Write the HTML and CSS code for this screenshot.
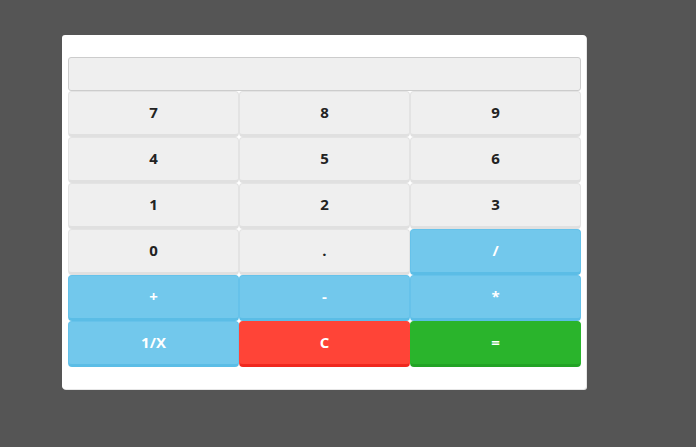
FILE: index.html
```html
<!DOCTYPE html>
<html>
<head>
<meta charset="utf-8">
<link rel="stylesheet" href="styles.css">
</head>
<body>
<div class="calc">
  <div class="display"></div>
  <div class="keys">
    <button class="key">7</button>
    <button class="key">8</button>
    <button class="key">9</button>
    <button class="key">4</button>
    <button class="key">5</button>
    <button class="key">6</button>
    <button class="key">1</button>
    <button class="key">2</button>
    <button class="key">3</button>
    <button class="key">0</button>
    <button class="key">.</button>
    <button class="key op">/</button>
    <button class="key op">+</button>
    <button class="key op">-</button>
    <button class="key op">*</button>
    <button class="key op">1/X</button>
    <button class="key clear">C</button>
    <button class="key equals">=</button>
  </div>
</div>
</body>
</html>
```

FILE: styles.css
```css
html, body {
  margin: 0;
  padding: 0;
  background: #555555;
  height: 100%;
}
body {
  font-family: "Open Sans", "Noto Sans", sans-serif;
}
.calc {
  box-sizing: border-box;
  margin: 35px 0 0 62px;
  width: 524px;
  height: 354px;
  background: #ffffff;
  border-radius: 3px;
  padding: 22px 5px 0 6px;
  box-shadow: 1px 1px 0 #e6e6e6;
}
.display {
  box-sizing: border-box;
  height: 34px;
  width: 513px;
  background: #efefef;
  border: 1px solid #cccccc;
  border-radius: 3px;
}
.keys {
  display: grid;
  grid-template-columns: 171px 171px 171px;
  grid-auto-rows: 46px;
}
.key {
  box-sizing: border-box;
  border: 1px solid #e3e3e3;
  border-bottom: 3px solid #e0e0e0;
  border-radius: 4px;
  background: #efefef;
  color: #222222;
  font-family: "Open Sans", "Noto Sans", sans-serif;
  font-weight: 700;
  font-size: 15px;
  padding: 0 0 2px 0;
  margin: 0;
}
.op {
  background: #72c8ec;
  border-color: #66c2ea;
  border-bottom-color: #5bbde6;
  color: #ffffff;
}
.clear {
  background: #ff4437;
  border-color: #ff4437;
  border-bottom-color: #f0281e;
  color: #ffffff;
}
.equals {
  background: #2ab42c;
  border-color: #2ab42c;
  border-bottom-color: #22a325;
  color: #ffffff;
}
```
